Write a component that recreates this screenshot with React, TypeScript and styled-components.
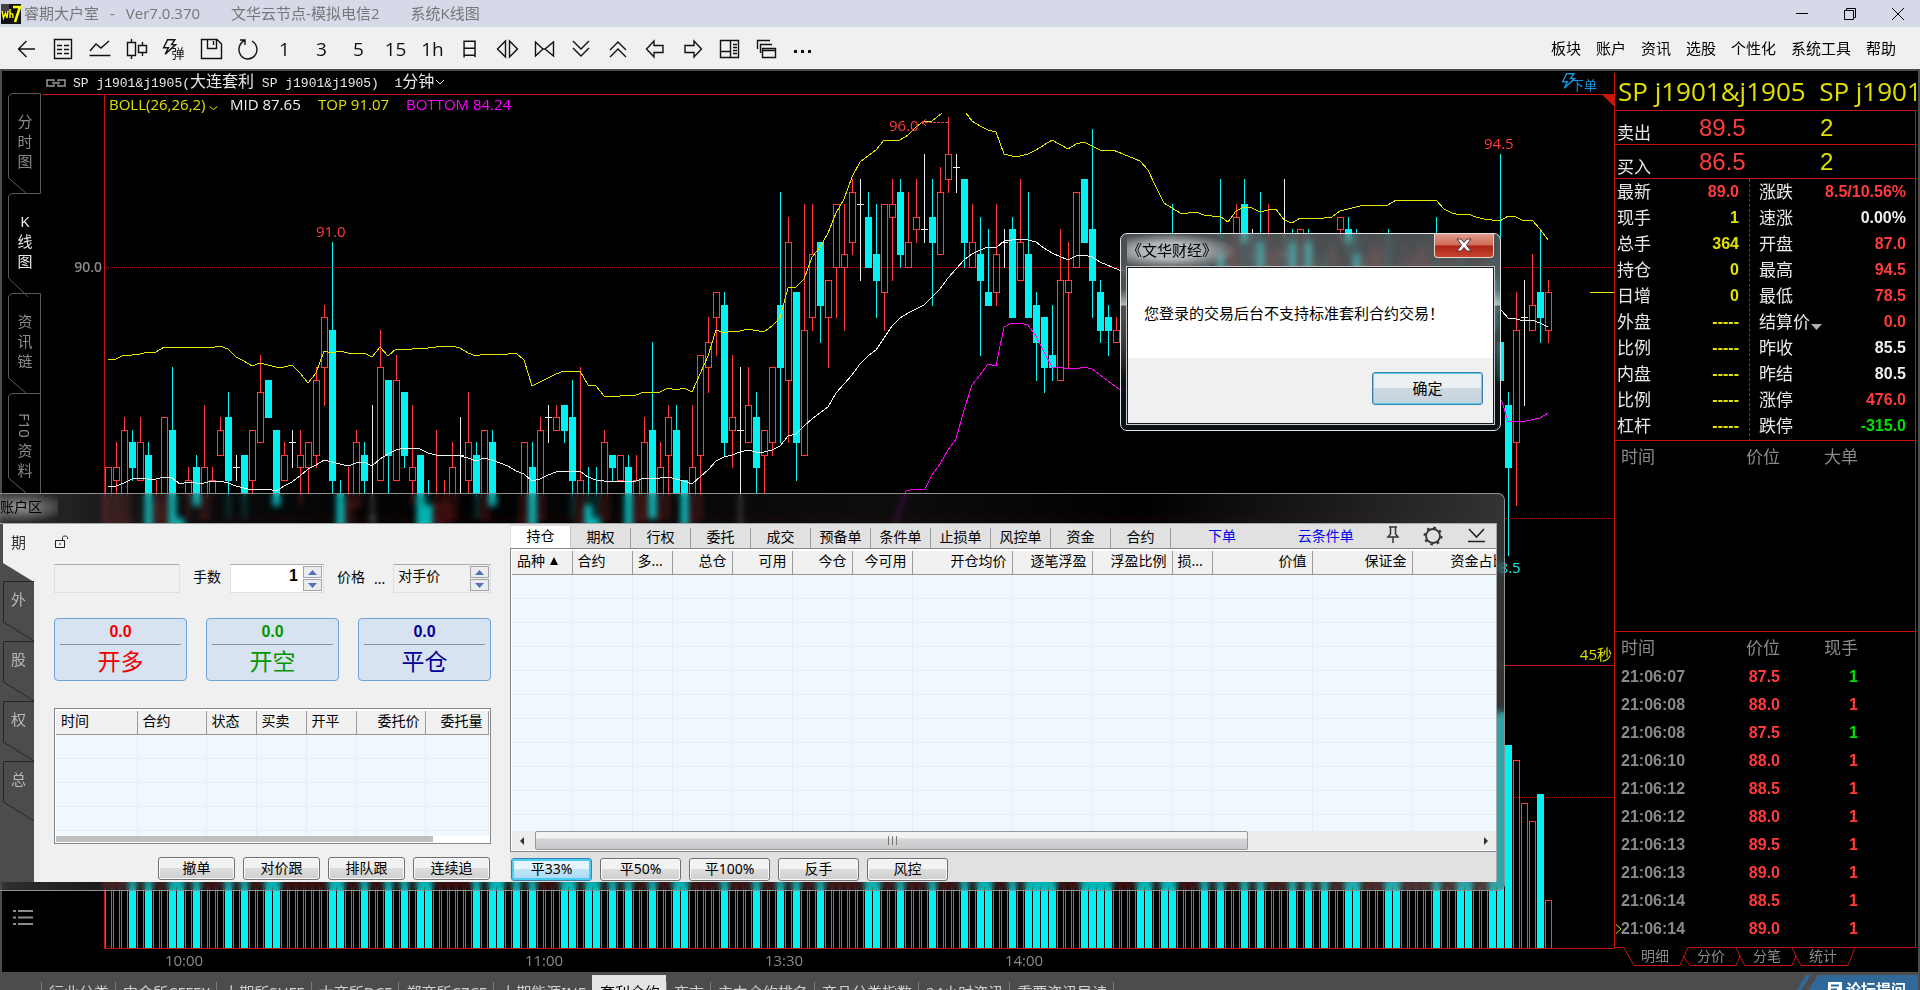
import React from "react";
import styled, { createGlobalStyle, css } from "styled-components";

const sans = `"Noto Sans", "Noto Sans CJK SC", sans-serif`;
const hei = `"Open Sans", "Noto Sans CJK SC", sans-serif`;
const arial = `"Liberation Sans", "Noto Sans CJK SC", sans-serif`;
const RED = "#ff3c3c";
const LINE = "#c8140a";
const CYAN = "#00f2f2";
const YELLOW = "#e0e000";
const GREEN = "#00e000";

const Global = createGlobalStyle`
  * { box-sizing: border-box; }
  html, body { margin: 0; height: 100%; background: #000; overflow: hidden; }
  #root { height: 100%; }
  button { font: inherit; color: inherit; background: none; border: 0; padding: 0; cursor: pointer; }
  a { color: inherit; text-decoration: none; }
  input { font: inherit; color: inherit; }
`;

const Page = styled.div`
  position: relative;
  display: flex;
  flex-direction: column;
  height: 100%;
  overflow: hidden;
  font-family: ${sans};
  font-size: 15px;
  white-space: nowrap;
`;

/* ---------- title bar and toolbar ---------- */

const TitleBar = styled.header`
  display: flex;
  align-items: center;
  flex: 0 0 27px;
  padding-left: 1px;
  background: #d6d9e8;
  color: #767676;
  font-family: ${hei};
`;
const Titles = styled.div`
  display: flex;
  gap: 31px;
  flex: 1;
  padding: 0 0 2px 3px;
  line-height: 24px;
`;
const TitleMain = styled.span`
  display: flex;
  gap: 11px;
`;
const WindowControls = styled.div`
  display: flex;
  gap: 4px;
`;
const ControlButton = styled.button`
  display: grid;
  place-items: center;
  width: 44px;
  height: 27px;
`;
const ToolBar = styled.div`
  display: flex;
  align-items: center;
  justify-content: space-between;
  flex: 0 0 44px;
  padding: 0 24px 0 7px;
  background: #f0f0f0;
  border-bottom: 2px solid #4c4c4c;
`;
const Tools = styled.div`
  display: flex;
`;
const ToolButton = styled.button`
  display: grid;
  place-items: center;
  width: 37px;
  height: 34px;
  padding-top: 2px;
  font-family: ${hei};
  font-size: 19px;
  line-height: 24px;
  color: #111;
`;
const Menu = styled.nav`
  display: flex;
  gap: 15px;
  color: #000;
  line-height: 22px;
`;

/* ---------- workspace ---------- */

const Workspace = styled.main`
  display: flex;
  flex: 1;
  min-height: 0;
  background: #000;
  border: solid #4c4c4c;
  border-width: 0 2px;
`;
const SideRail = styled.nav`
  display: flex;
  flex-direction: column;
  justify-content: space-between;
  flex: 0 0 40px;
  padding: 22px 0 45px 6px;
`;
const SideTab = styled.button<{ $active?: boolean }>`
  position: relative;
  display: flex;
  flex-direction: column;
  align-items: center;
  gap: 4px;
  width: 34px;
  height: 100px;
  padding-top: 20px;
  font-size: 15px;
  line-height: 16px;
  color: ${(p) => (p.$active ? "#e8e8e8" : "#8a8a8a")};
  svg {
    position: absolute;
    inset: 0;
  }
`;
const Sideways = styled.span`
  writing-mode: vertical-rl;
  line-height: 18px;
`;
const RailMenu = styled.button`
  width: 22px;
  height: 18px;
  margin-left: 5px;
`;
const ChartPane = styled.section`
  display: flex;
  flex-direction: column;
  flex: 1;
  min-width: 0;
`;
const ChartHeader = styled.div`
  display: flex;
  align-items: center;
  flex: 0 0 24px;
  padding: 0 17px 0 4px;
  border-bottom: 1px solid ${LINE};
  color: #e8e8e8;
  font-size: 16px;
`;
const Contract = styled.span`
  flex: 1;
  padding-left: 7px;
  line-height: 20px;
`;
const Mono = styled.span`
  font-family: "Liberation Mono", monospace;
  font-size: 13px;
  white-space: pre;
`;
const PlaceOrder = styled.button`
  display: flex;
  align-items: flex-end;
  font-size: 13px;
  line-height: 16px;
  color: #0f96e0;
  svg {
    margin: 0 -6px 4px 0;
  }
`;
const Chart = styled.svg`
  flex: 1;
  display: block;
  width: 100%;
  min-height: 0;
  font-family: ${hei};
  font-size: 15px;
`;

/* ---------- quote panel ---------- */

const QuotePanel = styled.aside`
  position: relative;
  flex: 0 0 304px;
  min-width: 0;
  display: flex;
  flex-direction: column;
  padding: 2px 2px 0 0;
  color: #e8e8e8;
`;
const QuoteName = styled.h1`
  margin: 0;
  padding: 0 0 0 3px;
  height: 37px;
  overflow: hidden;
  border-left: 1px solid ${LINE};
  font: 400 26px/36px ${hei};
  white-space: pre;
  color: ${YELLOW};
`;
const QuoteBody = styled.div`
  display: flex;
  flex-direction: column;
  border: solid ${LINE};
  border-width: 0 1px;
`;
const Depth = styled.div`
  display: grid;
  grid-template-columns: 82px 115px 1fr;
  align-items: center;
  height: 34px;
  padding-left: 2px;
  border-top: 1px solid ${LINE};
  font-size: 17px;
  & > b {
    font: 400 24px/34px ${arial};
    color: ${YELLOW};
    padding-left: 6px;
  }
  & > b:nth-child(2) {
    color: ${RED};
    padding: 0;
  }
  & > span {
    padding-top: 6px;
  }
`;
const Stats = styled.div`
  display: grid;
  grid-template-columns: 134px 1fr;
  border-top: 1px solid ${LINE};
  height: 262px;
`;
const StatList = styled.dl`
  margin: 0;
  padding: 0 10px 2px 2px;
  & + & {
    padding: 0 9px 2px 9px;
    border-left: 1px dashed ${LINE};
  }
`;
const Stat = styled.div`
  display: flex;
  justify-content: space-between;
  height: 26px;
  line-height: 26px;
  dt {
    font-size: 17px;
  }
  dd {
    margin: 0;
    font: 700 16px/26px ${arial};
  }
  svg {
    vertical-align: -4px;
  }
`;
const Ticks = styled.table<{ $height: number }>`
  display: block;
  width: 100%;
  height: ${(p) => p.$height}px;
  padding-left: 6px;
  border-collapse: collapse;
  border-top: 1px solid ${LINE};
  font: 700 16px/28px ${arial};
  th {
    height: 31px;
    padding: 3px 0 0;
    font-size: 17px;
    font-weight: 400;
    color: #8a8a8a;
    text-align: right;
  }
  td {
    height: 28px;
    padding: 0;
    text-align: right;
  }
  th:first-child,
  td:first-child {
    width: 80px;
    text-align: left;
    color: #8a8a8a;
  }
  th:nth-child(2),
  td:nth-child(2) {
    width: 79px;
    color: ${RED};
  }
  th:nth-child(2) {
    color: #8a8a8a;
  }
  th:nth-child(3) {
    width: 78px;
  }
`;
const Cursor = styled.i`
  position: absolute;
  left: 2px;
  bottom: 34px;
`;
const DetailTabs = styled.nav`
  position: relative;
  display: flex;
  height: 24px;
  padding-left: 13px;
  font-size: 14px;
  line-height: 18px;
  color: #8a8a8a;
  svg {
    position: absolute;
    left: 0;
    top: 0;
  }
  button {
    width: 56px;
    height: 18px;
  }
`;

/* ---------- bottom bar ---------- */

const BottomBar = styled.footer`
  display: flex;
  justify-content: space-between;
  align-items: flex-start;
  flex: 0 0 18px;
  padding: 3px 2px 0 41px;
  overflow: hidden;
  background: #4c4c4c;
  color: #d0d0d0;
`;
const BoardTabs = styled.nav`
  display: flex;
  padding-top: 7px;
`;
const BoardTab = styled.a<{ $active?: boolean }>`
  height: 24px;
  padding: 0 6px 0 7px;
  border-left: 1px solid #7c7c7c;
  line-height: 20px;
  ${(p) =>
    p.$active &&
    css`
      margin-top: -7px;
      padding-top: 7px;
      height: 32px;
      border-color: #e4e4e4;
      background: #e4e4e4;
      color: #000;
    `}
`;
const ForumLink = styled.a`
  display: flex;
  align-items: center;
  gap: 4px;
  height: 26px;
  padding: 2px 12px 0 32px;
  font-weight: 600;
  line-height: 24px;
  color: #fff;
  background: linear-gradient(122deg, transparent 8px, #2f6899 9px, #2f6899 12px, transparent 13px, transparent 18px, #2f6899 19px);
`;

/* ---------- floating windows ---------- */

const AccountWindow = styled.section`
  position: absolute;
  top: 493px;
  left: 0;
  right: 415px;
  height: 398px;
  display: flex;
  flex-direction: column;
  padding: 0 7px 8px 0;
  border: solid #8c9294;
  border-width: 1px 1px 1px 0;
  border-radius: 0 7px 7px 0;
  background: linear-gradient(90deg, rgba(90, 94, 96, 0.5), rgba(50, 56, 60, 0.2) 12%, rgba(0, 6, 10, 0.1) 30%, rgba(60, 66, 68, 0.2) 58%, rgba(0, 5, 8, 0.1) 76%, rgba(110, 114, 116, 0.45) 100%);
  backdrop-filter: blur(3px) brightness(0.95);
`;
const AccountTitle = styled.h2`
  position: relative;
  align-self: flex-start;
  margin: 0;
  flex: 0 0 29px;
  padding: 0 16px 0 0;
  font: 400 14px/26px ${sans};
  color: #000;
  background: radial-gradient(ellipse 50px 16px at 20px 13px, rgba(160, 160, 160, 0.9), transparent);
`;
const AccountBody = styled.div`
  display: flex;
  flex: 1;
  min-height: 0;
  border: solid #a4aaac;
  border-width: 1px 1px 0 0;
  background: #f0f0f0;
  color: #000;
  font-size: 14px;
`;
const MarketRail = styled.nav`
  flex: 0 0 34px;
  padding-left: 3px;
  background: #4c4c4c;
`;
const MarketTab = styled.button<{ $active?: boolean }>`
  position: relative;
  display: block;
  width: 31px;
  height: 60px;
  padding: 0 0 24px;
  font-size: 15px;
  line-height: 36px;
  color: ${(p) => (p.$active ? "#333" : "#b8b8b8")};
  &:first-child {
    height: 57px;
  }
  svg {
    position: absolute;
    inset: 0;
  }
  span {
    position: relative;
  }
`;
const OrderForm = styled.form`
  display: flex;
  flex-direction: column;
  flex: 0 0 476px;
  min-width: 0;
  padding: 11px 19px 0 20px;
`;
const FormRow = styled.div`
  display: flex;
  align-items: center;
  height: 29px;
  margin: 16px 0 25px;
  line-height: 20px;
  & > label {
    padding-bottom: 4px;
    margin: 0 9px 0 13px;
  }
`;
const Field = styled.div<{ $width: number; $white?: boolean }>`
  display: flex;
  width: ${(p) => p.$width}px;
  height: 29px;
  border: 1px solid #dcdfe6;
  border-top-color: #a9adb5;
  background: ${(p) => (p.$white ? "#fff" : "#f0f0f0")};
  input {
    flex: 1;
    min-width: 0;
    padding: 0 4px 6px;
    border: 0;
    background: transparent;
    outline: 0;
  }
`;
const Bold = styled.input`
  text-align: right;
  font: 700 16px/22px ${arial};
`;
const Spinner = styled.div`
  display: flex;
  flex-direction: column;
  gap: 1px;
  padding: 1px;
  button {
    display: grid;
    place-items: center;
    width: 19px;
    height: 12px;
    border: 1px solid #a2a4a8;
    background: #ececee;
  }
`;
const Dots = styled.button`
  width: 12px;
  margin-right: 8px;
  line-height: 20px;
`;
const TradeButtons = styled.div`
  display: grid;
  grid-template-columns: repeat(3, 133px);
  justify-content: space-between;
`;
const TradeButton = styled.button<{ $color: string }>`
  height: 63px;
  padding: 0 5px 4px;
  border: 1px solid #6ea3d8;
  border-radius: 4px;
  background: #d8e3f1;
  color: ${(p) => p.$color};
  font-size: 23px;
  line-height: 30px;
  b {
    display: block;
    margin-bottom: 1px;
    border-bottom: 1px solid #8b9095;
    font: 700 16px/24px ${arial};
  }
`;
const OrderList = styled.div`
  display: flex;
  flex-direction: column;
  height: 136px;
  margin-top: 27px;
  padding: 2px 1px 1px;
  overflow: hidden;
  border: 1px solid #828790;
  background: #fff;
`;
const GridScroll = styled.div`
  flex: 1;
  min-height: 0;
  overflow: hidden;
`;
const DataGrid = styled.table`
  table-layout: fixed;
  width: max-content;
  border-collapse: collapse;
  background: #f0f8ff;
  th {
    height: 23px;
    padding: 0 5px 2px;
    overflow: hidden;
    border-right: 1px solid #9a9a9a;
    border-bottom: 1px solid #9a9a9a;
    background: #f1f1f1;
    font-weight: 400;
    font-size: 14px;
    line-height: 20px;
  }
  td {
    height: 24px;
    padding: 0;
    border-right: 1px solid #ececec;
    border-bottom: 1px solid #ececec;
  }
`;
const Th = styled.th<{ $w: number; $right?: boolean }>`
  width: ${(p) => p.$w}px;
  text-align: ${(p) => (p.$right ? "right" : "left")};
`;
const ThinScroll = styled.div`
  flex: 0 0 6px;
  width: 87%;
  background: #bfbfbf;
`;
const FormActions = styled.div`
  display: flex;
  justify-content: flex-end;
  gap: 8px;
  margin: 13px 1px 0 0;
`;
const PushButton = styled.button<{ $w: number; $focus?: boolean }>`
  width: ${(p) => p.$w}px;
  height: 23px;
  padding-bottom: 2px;
  border: 1px solid #707070;
  border-radius: 3px;
  box-shadow: inset 0 0 0 1px #fafafa;
  background: linear-gradient(#f2f2f2 48%, #dcdcdc 50%, #cfcfcf);
  line-height: 18px;
  ${(p) =>
    p.$focus &&
    css`
      border-color: #3c7fb1;
      box-shadow: inset 0 0 0 2px #48cdf5;
      background: linear-gradient(#e6f5fd 48%, #bfe4f8 50%, #a9d8f2);
    `}
`;
const Positions = styled.section`
  display: flex;
  flex-direction: column;
  flex: 1;
  min-width: 0;
  padding: 2px 0 0 1px;
  background: #e1e1e1;
`;
const PositionTabs = styled.div`
  display: flex;
  align-items: flex-start;
  height: 22px;
  line-height: 22px;
`;
const PositionTab = styled.button<{ $active?: boolean }>`
  width: 60px;
  height: 20px;
  margin-top: 2px;
  padding-bottom: 2px;
  border-right: 1px solid #9c9c9c;
  line-height: 18px;
  ${(p) =>
    p.$active &&
    css`
      height: 22px;
      margin-top: 0;
      border-color: #c8c8c8;
      background: #fff;
    `}
`;
const TabLinks = styled.div`
  display: flex;
  justify-content: space-between;
  align-items: center;
  flex: 1;
  padding: 0 10px 0 37px;
  a {
    padding-bottom: 5px;
    color: #0000f0;
    line-height: 18px;
  }
  a + a {
    margin: 0 8px 0 38px;
  }
  button {
    height: 24px;
  }
`;
const PositionGrid = styled.div`
  display: flex;
  flex-direction: column;
  flex: 1;
  min-height: 0;
  margin-left: -1px;
  padding: 2px 0 1px 1px;
  border: 1px solid #828790;
  border-right: 0;
  background: #fff;
`;
const HScroll = styled.div`
  display: flex;
  align-items: center;
  flex: 0 0 19px;
  padding: 0 5px;
  background: #ececec;
`;
const Thumb = styled.div`
  display: grid;
  place-items: center;
  flex: 0 0 713px;
  height: 19px;
  margin: 0 auto 0 8px;
  border: 1px solid #979797;
  border-radius: 2px;
  background: linear-gradient(#f3f3f3 35%, #d6d6d8 40%, #c9c9cd);
`;
const PositionActions = styled.div`
  display: flex;
  gap: 8px;
  height: 30px;
  padding-top: 6px;
`;

const Dialog = styled.section`
  position: absolute;
  top: 233px;
  left: 1120px;
  width: 381px;
  height: 198px;
  display: flex;
  flex-direction: column;
  padding: 0 6px 6px;
  border: 1px solid #dfe4e6;
  border-radius: 7px;
  background: linear-gradient(rgba(112, 120, 124, 0.65), rgba(120, 126, 130, 0.65) 28%, rgba(205, 210, 214, 0.85) 36%, rgba(92, 96, 100, 0.8) 37%, rgba(70, 72, 80, 0.7) 55%, rgba(14, 22, 26, 0.75) 75%);
  backdrop-filter: blur(3px);
`;
const DialogTitle = styled.div`
  display: flex;
  justify-content: space-between;
  height: 33px;
  h2 {
    margin: 0;
    padding: 0 22px 2px 0;
    font: 400 15px/32px ${sans};
    color: #000;
    background: radial-gradient(ellipse 68px 18px at 42px 17px, rgba(185, 188, 190, 0.95) 45%, transparent);
  }
`;
const CloseButton = styled.button`
  display: grid;
  place-items: center;
  width: 60px;
  height: 24px;
  padding-bottom: 2px;
  border: 1px solid #e6d6d2;
  border-top: 0;
  border-radius: 0 0 4px 4px;
  background: linear-gradient(#e09a8c, #cf6b58 48%, #b02414 52%, #c44530);
`;
const DialogBody = styled.div`
  display: flex;
  flex-direction: column;
  flex: 1;
  border: 1px solid #1a1a1a;
  outline: 1px solid #c8ccce;
  background: #f0f0f0;
  color: #000;
  font-size: 15px;
  p {
    height: 90px;
    margin: 0;
    padding: 0 16px;
    background: #fff;
    line-height: 90px;
  }
`;
const OkButton = styled.button`
  align-self: flex-end;
  width: 111px;
  height: 33px;
  margin: 14px 10px 0 0;
  padding-bottom: 2px;
  border: 1px solid #3c7fb1;
  border-radius: 3px;
  box-shadow: inset 0 0 0 1px #60cdf0;
  background: linear-gradient(#eaf0f4 47%, #cdd9e1 50%, #c6d4dd);
`;

/* ---------- chart data: kind, high, body top, body bottom, low (half points above 90) ---------- */

const candleText = `r-16,-16,-24,-24 r-14,-16,-17,-24 r-12,-13,-24,-24 c-13,-14,-16,-17 r-12,-14,-17,-17 c-14,-15,-24,-24 r-17,-19,-24,-24 r-12,-12,-24,-24
c-8,-13,-24,-24 c-20,-20,-24,-24 r-16,-17,-18,-20 c-15,-16,-19,-19 r-11,-16,-20,-20 r-16,-17,-18,-18 r-12,-13,-15,-15 c-10,-12,-17,-20
w-15,-16,-16,-17 c-15,-15,-18,-20 r-13,-13,-17,-18 r-7,-10,-14,-14 c-9,-9,-12,-12 c-13,-13,-19,-19 r-14,-15,-17,-17 w-13,-14,-14,-16
r-13,-15,-16,-19 r-14,-14,-16,-18 r-8,-9,-15,-16 r-3,-4,-8,-11 c2,-5,-17,-18 c-17,-18,-24,-24 r-16,-19,-24,-24 r-13,-14,-19,-19
c-14,-15,-17,-18 w-11,-20,-20,-24 r-5,-8,-17,-17 c-9,-9,-15,-18 r-7,-9,-17,-17 c-10,-10,-15,-16 r-11,-16,-17,-19 c-15,-15,-24,-24
c-17,-19,-24,-24 r-13,-19,-24,-24 r-17,-19,-24,-24 r-14,-16,-20,-20 w-12,-15,-15,-18 r-10,-14,-17,-18 c-14,-15,-18,-20 r-13,-13,-20,-20
c-13,-14,-19,-19 c-22,-22,-24,-24 r-22,-22,-24,-24 c-22,-22,-24,-24 r-14,-14,-24,-24 c-14,-16,-24,-24 r-12,-13,-20,-20 w-11,-12,-12,-14
r-11,-12,-13,-13 c-11,-11,-13,-14 c-9,-12,-17,-20 r-8,-17,-22,-24 c-16,-19,-24,-24 c-16,-20,-24,-24 r-13,-14,-20,-20 c-15,-15,-16,-17
r-15,-15,-17,-17 c-15,-16,-24,-24 r-15,-17,-24,-24 r-12,-14,-20,-20 c-6,-13,-20,-20 r-14,-16,-20,-20 r-11,-12,-15,-20 c-11,-13,-18,-18
c-17,-17,-24,-24 r-11,-16,-24,-24 r-7,-7,-15,-20 r-4,-6,-8,-10 r-2,-2,-4,-7 c-2,-3,-14,-15 r-7,-12,-13,-16 w-8,-13,-13,-24
r-8,-11,-14,-14 c-10,-12,-16,-18 r-13,-13,-15,-18 r-8,-8,-14,-15 c6,-3,-8,-14 r4,2,-9,-14 c-2,-2,-14,-17 r5,-5,-15,-15
r5,1,-4,-5 c2,2,-3,-6 r-1,-1,-4,-8 r5,5,0,-4 r5,1,0,-5 r7,6,2,1 w7,5,5,-1 c6,4,0,0
c5,1,-1,-4 r5,5,-2,-5 r7,5,4,-1 c7,6,1,0 r6,2,0,0 r7,4,3,2 w9,3,3,2 c7,4,2,-3
r8,6,1,1 r12,9,7,6 w9,8,8,6 c7,7,2,0 r5,2,0,0 c4,1,-1,-7 c3,-2,-3,-3 r5,1,-2,-3
w3,2,2,0 c4,3,-4,-4 r7,2,-1,-1 c6,1,-4,-4 c-2,-3,-6,-9 c-4,-4,-8,-10 c-3,-7,-8,-9 r3,-1,-9,-9
r2,-1,-2,-8 r6,6,0,0 c7,7,2,2 c11,3,-1,-4 c-1,-2,-5,-6 c-3,-4,-5,-7 r-4,-5,-6,-6 r-3,-4,-8,-8
r-3,-4,-8,-10 c-4,-5,-8,-11 c-5,-6,-10,-12 r-4,-5,-9,-10 c-2,-4,-8,-9 c5,-2,-4,-6 r0,-2,-4,-5 r1,0,-3,-4
r0,-1,-4,-4 c1,0,-4,-6 r1,-1,-3,-4 c7,1,-2,-3 r2,1,-2,-2 r5,4,-1,-2 c7,5,2,-1 w3,1,1,-2
c6,2,-1,-1 r5,1,-2,-2 r2,1,-2,-3 w7,1,1,0 c3,2,-3,-4 r3,3,-2,-3 c3,2,-3,-5 r1,0,-3,-3
c1,-1,-4,-5 r2,1,-3,-4 r4,4,3,2 c4,3,2,1 c3,1,-3,-5 r1,0,-3,-4 r2,1,-2,-2 r2,1,-1,-2
c3,-2,-4,-5 c0,-1,-4,-5 r2,0,-3,-3 r1,0,-3,-4 r2,1,-2,-2 r2,0,-3,-3 c4,-2,-4,-5 r1,-1,-4,-5
r1,-2,-4,-4 c2,-1,-5,-6 c-1,-3,-6,-6 r0,-3,-5,-6 r1,-1,-5,-5 c1,-1,-5,-8 c9,-6,-9,-9 c-10,-11,-16,-23
r-2,-5,-14,-19 w-1,-4,-4,-11 r1,-3,-5,-5 c3,-2,-4,-6 r-1,-2,-5,-6`;

const candles = candleText.split(/\s+/).map((s) => {
  const [high, top, bottom, low] = s.slice(1).split(",").map(Number);
  return { kind: s[0], high, top, bottom, low };
});

const lateVolume: Record<number, number> = { 172: 850, 173: 712, 174: 712, 175: 745, 176: 760, 177: 803, 178: 821, 179: 794, 180: 900 };
const kinds: Record<string, string> = { r: RED, c: CYAN, w: "#f0f0f0" };
const py = (k: number) => Math.round(267 - 12.53 * k);

const topBand = [
  "108,360 116,359 124,355 132,355 140,354 148,352 156,352 164,347 172,348 180,347 215,347 220,346 228,349 236,357 244,361 252,366 260,363 268,365 276,367 284,367 292,365 300,373 308,383 316,373 324,351 332,353 340,351 348,353 364,353 372,357 380,347 388,356 396,349 412,349 428,348 444,346 452,346 460,348 468,353 476,356 484,354 508,354 516,353 524,360 532,386 540,382 548,378 556,374 564,371 580,371 588,385 596,386 604,396 612,397 620,396 636,395 644,392 660,392 668,388 676,390 684,388 692,392 700,374 708,356 716,330 724,333 732,331 740,331 748,329 764,332 772,326 780,318 788,288 796,287 804,279 812,257 820,247 828,233 836,213 844,199 852,177 860,162 868,156 876,150 884,140 892,141 900,140 908,135 916,127 924,121 932,121 942,113",
  "966,113 972,121 980,126 988,130 996,132 1004,154 1012,156 1020,156 1028,154 1036,150 1052,140 1068,149 1076,144 1084,142 1092,146 1100,150 1113,150 1118,152 1140,161 1148,170 1156,187 1164,203 1172,208 1180,213 1188,213 1196,212 1204,215 1212,216 1220,216 1228,222 1236,211 1244,207 1252,208 1260,212 1268,210 1276,209 1284,220 1292,223 1300,218 1308,218 1324,218 1332,217 1340,211 1348,209 1356,207 1364,205 1388,205 1396,200 1412,200 1420,201 1428,200 1436,200 1444,209 1452,213 1460,215 1468,214 1476,217 1484,219 1500,221 1508,216 1516,217 1524,221 1532,220 1540,229 1548,240",
];
const midBand =
  "108,486 116,486 124,483 132,479 140,478 148,479 156,479 164,477 172,478 180,484 188,482 196,483 204,483 212,481 220,481 228,483 236,486 244,488 252,490 260,489 268,489 276,491 284,486 292,482 300,476 308,469 316,465 324,460 332,462 348,466 356,463 364,462 372,466 380,459 388,454 396,450 404,448 420,449 428,453 436,455 444,456 452,455 460,456 468,458 476,461 484,458 492,460 500,463 508,466 516,471 524,474 532,481 540,479 548,475 556,472 564,471 580,471 588,477 596,480 612,482 620,481 628,482 636,481 644,478 660,478 668,477 676,479 684,481 692,484 700,477 708,470 716,461 724,457 732,455 740,452 748,450 756,452 764,452 772,450 780,446 788,436 796,434 804,426 812,419 828,407 836,393 844,384 852,375 860,364 868,356 876,350 884,338 892,326 900,318 908,313 916,309 924,305 932,297 940,289 948,278 956,269 964,260 972,254 980,250 988,247 996,248 1004,241 1012,240 1020,239 1028,240 1036,242 1044,248 1052,253 1068,260 1076,256 1084,255 1092,257 1100,262 1119,270 1300,290 1502,311 1508,318 1516,319 1524,321 1532,320 1540,323 1548,327";
const lowBand =
  "895,524 906,491 914,489 925,489 932,475 940,464 948,450 956,439 964,410 972,385 980,375 988,364 996,366 1004,327 1012,323 1020,323 1028,325 1036,336 1044,352 1052,367 1076,369 1084,367 1092,369 1119,389 1160,410 1490,380 1502,402 1508,421 1526,421 1540,418 1548,413";

function PriceChart() {
  return (
    <Chart viewBox="42 95 1572 877" preserveAspectRatio="xMinYMin slice" role="img" aria-label="K线图">
      <g shapeRendering="crispEdges" fill="none">
        <g stroke="#a01010" strokeDasharray="1 1">
          <path d="M104 267.5H1614M104 518.5H1614M104 797.5H1614" />
        </g>
        {candles.map((c, i) => {
          const x = 105 + i * 8;
          const color = kinds[c.kind];
          const high = py(c.high);
          const top = py(c.top);
          const bottom = py(c.bottom);
          const low = py(c.low);
          const volumeTop = lateVolume[i] ?? 850;
          const up = c.kind !== "c";
          return (
            <g key={i} stroke={color}>
              {high < top && <path d={`M${x + 3.5} ${high}V${top}`} />}
              {low > bottom && <path d={`M${x + 3.5} ${bottom}V${low + 1}`} />}
              {c.kind === "c" && <rect x={x} y={top} width="7" height={bottom - top + 1} fill={CYAN} stroke="none" />}
              {c.kind === "r" && <rect x={x + 0.5} y={top + 0.5} width="6" height={bottom - top} />}
              {c.kind === "w" && <path d={`M${x} ${top + 0.5}h7`} />}
              {up ? (
                <rect x={x + 0.5} y={volumeTop + 0.5} width="6" height={948 - volumeTop} stroke={RED} />
              ) : (
                <rect x={x} y={volumeTop} width="7" height={948 - volumeTop} fill={CYAN} stroke="none" />
              )}
            </g>
          );
        })}
        {topBand.map((p) => (
          <polyline key={p.length} points={p} stroke="#e6e600" />
        ))}
        <polyline points={midBand} stroke="#f0f0f0" />
        <polyline points={lowBand} stroke="#f0f" />
        <path d="M104.5 95V948.5H1614M104 665.5H1614" stroke={LINE} />
        <path d="M1590 292.5h24" stroke="#e6e600" />
        <path d="M948 122.5H921" stroke={RED} strokeDasharray="3 1" />
        <path d="M926 119l-4 3.500l4 3.500" stroke={RED} />
        <path d="M1602 95H1614V107Z" fill={LINE} />
      </g>
      <text x="109" y="110" fill={YELLOW}>BOLL(26,26,2)</text>
      <path d="M209.500 106.500l4 3l4-3" fill="none" stroke={YELLOW} />
      <text x="230" y="110" fill="#f0f0f0">MID 87.65</text>
      <text x="318" y="110" fill={YELLOW}>TOP 91.07</text>
      <text x="406" y="110" fill="#f0f">BOTTOM 84.24</text>
      <g fill={RED}>
        <text x="316" y="237">91.0</text>
        <text x="889" y="131">96.0</text>
        <text x="1484" y="149">94.5</text>
      </g>
      <text x="1491" y="573" fill={CYAN}>78.5</text>
      <text x="102" y="272" textAnchor="end" fill="#8a8a8a" fontWeight="600" fontSize="14">90.0</text>
      <text x="1612" y="660" textAnchor="end" fill={YELLOW}>45秒</text>
      <g fill="#8a8a8a" textAnchor="middle">
        <text x="184" y="966">10:00</text>
        <text x="544" y="966">11:00</text>
        <text x="784" y="966">13:30</text>
        <text x="1024" y="966">14:00</text>
      </g>
    </Chart>
  );
}

/* ---------- icons ---------- */

const toolPaths: Record<string, string> = {
  返回: "M5 12H21M12.500 4L4.500 12L12.500 20",
  报价: "M3.500 2.500H20.500V21.500H3.500ZM6 8.500H11M13 8.500H18M6 12.500H11M13 12.500H18M6 16.500H11M13 16.500H18",
  分时: "M1.500 18.500H22.500M2 14L8 7L13 11L21 4",
  K线: "M6.500 2V6M2.500 5.500H10.500V18.500H2.500ZM6.500 18V22M17.500 5V8M13.500 8.500H21.500V15.500H13.500ZM17.500 15V19",
  保存: "M2.500 2.500H18L22.500 7V21.500H2.500ZM8.500 3V11.500H17.500V3M14.500 4V8",
  刷新: "M4 3H9V8M9 3.500A9 9.500 0 1 0 16 4",
  放大: "M10.500 4V20L2.500 12ZM14.500 4V20L22.500 12Z",
  缩小: "M3.500 5V19L11 12ZM21.500 5V19L13 12ZM11 12H13",
  下翻: "M4 4L12 12L20 4M4 11L12 19L20 11",
  上翻: "M4 13L12 5L20 13M4 20L12 12L20 20",
  左移: "M3.500 12L11 4V8.500H20V15.500H11V20Z",
  右移: "M21.500 12L14 4V8.500H5V15.500H14V20Z",
  布局: "M3.500 3.500H21.500V20.500H3.500ZM13.500 3V21M4 14.500H13M16 7.500H20M16 10.500H20M16 13.500H20M16 16.500H20",
  窗口: "M3.500 12V3.500H16M6.500 16V7.500H18M8.500 11.500H21.500V20.500H8.500ZM8.500 13.500H21",
};

const ToolIcon = ({ name }: { name: string }) => (
  <svg width="24" height="24" viewBox="0 0 24 24" fill="none" stroke="#111" strokeWidth="1.4" aria-hidden="true">
    <path d={toolPaths[name]} />
  </svg>
);

const Bolt = ({ size, color }: { size: number; color: string }) => (
  <svg width={size} height={size} viewBox="0 0 20 20" fill="none" stroke={color} strokeWidth="1.8" aria-hidden="true">
    <path d="M7 1H16L12 7H17L4 19L8 11H2Z" />
  </svg>
);

const tools = ["返回", "报价", "分时", "K线", "闪电", "保存", "刷新", "1", "3", "5", "15", "1h", "日", "放大", "缩小", "下翻", "上翻", "左移", "右移", "布局", "窗口", "更多"];

const FlashTool = styled.span`
  display: flex;
  align-items: flex-end;
  font-size: 13px;
  line-height: 14px;
  svg {
    margin: 0 -7px 5px 0;
  }
`;

function Tool({ name }: { name: string }) {
  if (toolPaths[name]) return <ToolIcon name={name} />;
  if (name === "闪电")
    return (
      <FlashTool>
        <Bolt size={16} color="#111" />弹
      </FlashTool>
    );
  if (name === "更多")
    return (
      <svg width="20" height="20" viewBox="0 0 20 20" aria-hidden="true">
        <path d="M1 11h3v3H1zM8 11h3v3H8zM15 11h3v3h-3z" fill="#111" />
      </svg>
    );
  return <>{name}</>;
}

const Arrow = ({ up }: { up?: boolean }) => (
  <svg width="9" height="5" viewBox="0 0 9 5" aria-hidden="true">
    <path d={up ? "M4.500 0L9 5H0Z" : "M4.500 5L9 0H0Z"} fill="#5070b8" />
  </svg>
);

/* ---------- content ---------- */

const leftStats: [string, string, string][] = [
  ["最新", "89.0", RED],
  ["现手", "1", YELLOW],
  ["总手", "364", YELLOW],
  ["持仓", "0", YELLOW],
  ["日增", "0", YELLOW],
  ["外盘", "-----", YELLOW],
  ["比例", "-----", YELLOW],
  ["内盘", "-----", YELLOW],
  ["比例", "-----", YELLOW],
  ["杠杆", "-----", YELLOW],
];
const rightStats: [string, string, string][] = [
  ["涨跌", "8.5/10.56%", RED],
  ["速涨", "0.00%", "#f0f0f0"],
  ["开盘", "87.0", RED],
  ["最高", "94.5", RED],
  ["最低", "78.5", RED],
  ["结算价", "0.0", RED],
  ["昨收", "85.5", "#f0f0f0"],
  ["昨结", "80.5", "#f0f0f0"],
  ["涨停", "476.0", RED],
  ["跌停", "-315.0", GREEN],
];
const ticks: [string, string, string][] = [
  ["21:06:07", "87.5", GREEN],
  ["21:06:08", "88.0", RED],
  ["21:06:08", "87.5", GREEN],
  ["21:06:10", "88.0", RED],
  ["21:06:12", "88.5", RED],
  ["21:06:12", "88.0", RED],
  ["21:06:13", "89.5", RED],
  ["21:06:13", "89.0", RED],
  ["21:06:14", "88.5", RED],
  ["21:06:14", "89.0", RED],
];
const orderCols: [string, number, boolean][] = [
  ["时间", 81, false],
  ["合约", 69, false],
  ["状态", 50, false],
  ["买卖", 50, false],
  ["开平", 50, false],
  ["委托价", 69, true],
  ["委托量", 63, true],
];
const positionCols: [string, number, boolean][] = [
  ["品种", 60, false],
  ["合约", 60, false],
  ["多...", 40, false],
  ["总仓", 60, true],
  ["可用", 60, true],
  ["今仓", 60, true],
  ["今可用", 60, true],
  ["开仓均价", 100, true],
  ["逐笔浮盈", 80, true],
  ["浮盈比例", 80, true],
  ["损...", 40, false],
  ["价值", 100, true],
  ["保证金", 100, true],
  ["资金占比", 100, true],
];
const boards = ["行业分类", "中金所CFFEX", "上期所SHFE", "大商所DCE", "郑商所CZCE", "上期能源INE", "套利合约", "夜市", "主力合约排名", "商品分类指数", "24小时资讯", "重要资讯导读"];

const StatValue = styled.span<{ $color: string }>`
  color: ${(p) => p.$color};
`;

function StatRows({ rows }: { rows: [string, string, string][] }) {
  return (
    <StatList>
      {rows.map(([label, value, color], i) => (
        <Stat key={i}>
          <dt>
            {label}
            {label === "结算价" && (
              <svg width="12" height="12" viewBox="0 0 12 12" aria-hidden="true">
                <path d="M1 4H12L6.500 10Z" fill="#b0b0b0" />
              </svg>
            )}
          </dt>
          <dd>
            <StatValue $color={color}>{value}</StatValue>
          </dd>
        </Stat>
      ))}
    </StatList>
  );
}

function Grid({ cols, rows }: { cols: [string, number, boolean][]; rows: number }) {
  return (
    <DataGrid>
      <thead>
        <tr>
          {cols.map(([label, w, right]) => (
            <Th key={label} $w={w} $right={right} scope="col">
              {label}
              {label === "品种" && (
                <svg width="14" height="9" viewBox="0 0 14 9" aria-hidden="true">
                  <path d="M9 0L13 8H5Z" fill="#000" />
                </svg>
              )}
            </Th>
          ))}
        </tr>
      </thead>
      <tbody>
        {Array.from({ length: rows }, (_, r) => (
          <tr key={r}>
            {cols.map(([label]) => (
              <td key={label} />
            ))}
          </tr>
        ))}
      </tbody>
    </DataGrid>
  );
}

function SpinButtons({ label }: { label: string }) {
  return (
    <Spinner>
      <button type="button" aria-label={`${label}增加`}>
        <Arrow up />
      </button>
      <button type="button" aria-label={`${label}减少`}>
        <Arrow />
      </button>
    </Spinner>
  );
}

function SideTabs() {
  const tabs = [["分", "时", "图"], ["K", "线", "图"], ["资", "讯", "链"], ["F10", "资", "料"]];
  return (
    <div>
      {tabs.map((chars, i) => (
        <SideTab key={i} $active={i === 1}>
          <svg width="34" height="108" viewBox="0 0 34 108" fill="none" stroke="#5a5a5a" aria-hidden="true">
            <path d={i === 1 ? "M18 .5H4L.5 3V85L20 104" : "M18 100L.5 85V3L4 .5H32.500V100.500H18"} />
          </svg>
          {chars.map((c) => (c === "F10" ? <Sideways key={c}>{c}</Sideways> : <span key={c}>{c}</span>))}
        </SideTab>
      ))}
    </div>
  );
}

function Quote() {
  return (
    <QuotePanel>
      <QuoteName>{"SP j1901&j1905  SP j1901&j1905"}</QuoteName>
      <QuoteBody>
        <Depth>
          <span>卖出</span>
          <b>89.5</b>
          <b>2</b>
        </Depth>
        <Depth>
          <span>买入</span>
          <b>86.5</b>
          <b>2</b>
        </Depth>
        <Stats>
          <StatRows rows={leftStats} />
          <StatRows rows={rightStats} />
        </Stats>
        <Ticks $height={191}>
          <thead>
            <tr>
              <th scope="col">时间</th>
              <th scope="col">价位</th>
              <th scope="col">大单</th>
            </tr>
          </thead>
        </Ticks>
        <Ticks $height={316}>
          <thead>
            <tr>
              <th scope="col">时间</th>
              <th scope="col">价位</th>
              <th scope="col">现手</th>
            </tr>
          </thead>
          <tbody>
            {ticks.map(([time, price, color], i) => (
              <tr key={i}>
                <td>{time}</td>
                <td>{price}</td>
                <td>
                  <StatValue $color={color}>1</StatValue>
                </td>
              </tr>
            ))}
          </tbody>
        </Ticks>
      </QuoteBody>
      <DetailTabs>
        <svg width="302" height="20" viewBox="0 0 302 20" fill="none" stroke={LINE} aria-hidden="true">
          <path d="M0 .5H10L20 18.500H66L74 .5H302M69 9L76 18.500H122L126 9L122 .500M125 8L131 18.500H178L182 9L178 .500M181 8L187 18.500H234L241 .5" />
        </svg>
        {["明细", "分价", "分笔", "统计"].map((t) => (
          <button key={t}>{t}</button>
        ))}
      </DetailTabs>
      <Cursor>
        <svg width="6" height="10" viewBox="0 0 6 10" fill="none" stroke={YELLOW} aria-hidden="true">
          <path d="M0 .5L5 5L0 9.500" />
        </svg>
      </Cursor>
    </QuotePanel>
  );
}

function Account() {
  return (
    <AccountWindow>
      <AccountTitle>账户区</AccountTitle>
      <AccountBody>
        <MarketRail>
          {["期", "外", "股", "权", "总"].map((t, i) => (
            <MarketTab key={t} $active={i === 0}>
              <svg width="31" height="60" viewBox="0 0 31 60" aria-hidden="true">
                {i === 0 ? (
                  <path d="M0 0H31V58L0 39Z" fill="#f0f0f0" />
                ) : (
                  <path d="M31 .5H.5V41L31 60" fill="none" stroke="#262626" />
                )}
              </svg>
              <span>{t}</span>
            </MarketTab>
          ))}
        </MarketRail>
        <OrderForm onSubmit={(e) => e.preventDefault()}>
          <svg width="15" height="13" viewBox="0 0 15 13" fill="none" stroke="#222" aria-hidden="true">
            <path d="M1.500 5.500H10.500V12.500H1.500ZM8.500 5V2.500C8.500 .500 13.500 .500 13.500 2.500V4M6 8V10" />
          </svg>
          <FormRow>
            <Field $width={126}>
              <input aria-label="合约" />
            </Field>
            <label htmlFor="lots">手数</label>
            <Field $width={94} $white>
              <Bold id="lots" defaultValue="1" />
              <SpinButtons label="手数" />
            </Field>
            <label htmlFor="price">价格</label>
            <Dots type="button">...</Dots>
            <Field $width={98}>
              <input id="price" defaultValue="对手价" />
              <SpinButtons label="价格" />
            </Field>
          </FormRow>
          <TradeButtons>
            <TradeButton $color="#f00000">
              <b>0.0</b>开多
            </TradeButton>
            <TradeButton $color="#009600">
              <b>0.0</b>开空
            </TradeButton>
            <TradeButton $color="#000096">
              <b>0.0</b>平仓
            </TradeButton>
          </TradeButtons>
          <OrderList>
            <GridScroll>
              <Grid cols={orderCols} rows={5} />
            </GridScroll>
            <ThinScroll />
          </OrderList>
          <FormActions>
            {["撤单", "对价跟", "排队跟", "连续追"].map((t) => (
              <PushButton key={t} type="button" $w={77}>
                {t}
              </PushButton>
            ))}
          </FormActions>
        </OrderForm>
        <Positions>
          <PositionTabs>
            {["持仓", "期权", "行权", "委托", "成交", "预备单", "条件单", "止损单", "风控单", "资金", "合约"].map((t, i) => (
              <PositionTab key={t} $active={i === 0}>
                {t}
              </PositionTab>
            ))}
            <TabLinks>
              <a href="#order">下单</a>
              <a href="#cloud">云条件单</a>
              <button aria-label="固定">
                <svg width="14" height="18" viewBox="0 0 14 18" fill="none" stroke="#333" strokeWidth="1.500" aria-hidden="true">
                  <path d="M3 1H11M4.500 1V8L2 11H12L9.500 8V1M7 11V17" />
                </svg>
              </button>
              <button aria-label="设置">
                <svg width="20" height="20" viewBox="0 0 20 20" fill="none" stroke="#333" aria-hidden="true">
                  <circle cx="10" cy="10" r="7" strokeWidth="1.800" />
                  <circle cx="10" cy="10" r="8.500" strokeWidth="2" strokeDasharray="2.600 4.080" />
                </svg>
              </button>
              <button aria-label="收起">
                <svg width="19" height="18" viewBox="0 0 19 18" fill="none" stroke="#222" strokeWidth="1.600" aria-hidden="true">
                  <path d="M2 3L9.500 11L17 3M1 15.500H18" />
                </svg>
              </button>
            </TabLinks>
          </PositionTabs>
          <PositionGrid>
            <GridScroll>
              <Grid cols={positionCols} rows={11} />
            </GridScroll>
            <HScroll>
              <svg width="10" height="10" viewBox="0 0 10 10" aria-hidden="true">
                <path d="M7 1V9L3 5Z" fill="#333" />
              </svg>
              <Thumb>
                <svg width="10" height="9" viewBox="0 0 10 9" stroke="#777" aria-hidden="true">
                  <path d="M1.500 0V9M5.500 0V9M9.500 0V9" />
                </svg>
              </Thumb>
              <svg width="10" height="10" viewBox="0 0 10 10" aria-hidden="true">
                <path d="M3 1V9L7 5Z" fill="#333" />
              </svg>
            </HScroll>
          </PositionGrid>
          <PositionActions>
            {["平33%", "平50%", "平100%", "反手", "风控"].map((t, i) => (
              <PushButton key={t} $w={81} $focus={i === 0}>
                {t}
              </PushButton>
            ))}
          </PositionActions>
        </Positions>
      </AccountBody>
    </AccountWindow>
  );
}

export default function App() {
  return (
    <Page>
      <Global />
      <TitleBar>
        <svg width="20" height="20" viewBox="0 0 20 20" aria-hidden="true">
          <rect width="20" height="20" fill="#111" />
          <rect width="8" height="8" fill="#444" />
          <path d="M12 3H19L14 18" fill="none" stroke="#ff0" strokeWidth="2.500" />
          <path d="M1 7L2.500 14L4.500 9L6 14L7 7M9 5V14M9 10C12 9 12 10 12 14" fill="none" stroke="#ff0" strokeWidth="1.400" />
        </svg>
        <Titles>
          <TitleMain>
            <span>睿期大户室</span>
            <span>-</span>
            <span>Ver7.0.370</span>
          </TitleMain>
          <span>文华云节点-模拟电信2</span>
          <span>系统K线图</span>
        </Titles>
        <WindowControls>
          <ControlButton aria-label="最小化">
            <svg width="14" height="14" viewBox="0 0 14 14" stroke="#000" aria-hidden="true">
              <path d="M1 6.500H13" />
            </svg>
          </ControlButton>
          <ControlButton aria-label="还原">
            <svg width="14" height="14" viewBox="0 0 14 14" fill="none" stroke="#000" aria-hidden="true">
              <path d="M1.500 3.500H10.500V12.500H1.500ZM3.500 3V1.500H12.500V10.500H11" />
            </svg>
          </ControlButton>
          <ControlButton aria-label="关闭">
            <svg width="14" height="14" viewBox="0 0 14 14" stroke="#000" aria-hidden="true">
              <path d="M1 1L13 13M13 1L1 13" />
            </svg>
          </ControlButton>
        </WindowControls>
      </TitleBar>
      <ToolBar>
        <Tools>
          {tools.map((t) => (
            <ToolButton key={t} aria-label={t}>
              <Tool name={t} />
            </ToolButton>
          ))}
        </Tools>
        <Menu>
          {["板块", "账户", "资讯", "选股", "个性化", "系统工具", "帮助"].map((t) => (
            <a key={t} href="#menu">
              {t}
            </a>
          ))}
        </Menu>
      </ToolBar>
      <Workspace>
        <SideRail>
          <SideTabs />
          <RailMenu aria-label="列表">
            <svg width="22" height="18" viewBox="0 0 22 18" stroke="#8c8c8c" strokeWidth="2" aria-hidden="true">
              <path d="M0 2H3M5 2H20M0 8.500H3M5 8.500H20M0 15H3M5 15H20" />
            </svg>
          </RailMenu>
        </SideRail>
        <ChartPane>
          <ChartHeader>
            <svg width="20" height="8" viewBox="0 0 20 8" fill="none" stroke="#999" strokeWidth="1.500" aria-hidden="true">
              <path d="M8 2.500V1H1V7H8V5.500M12 2.500V1H19V7H12V5.500M6 4H14" />
            </svg>
            <Contract>
              <Mono>SP j1901&amp;j1905(</Mono>大连套利<Mono>{" SP j1901&j1905)  1"}</Mono>分钟
              <svg width="12" height="8" viewBox="0 0 12 8" fill="none" stroke="#e8e8e8" aria-hidden="true">
                <path d="M2 1L6 5L10 1" />
              </svg>
            </Contract>
            <PlaceOrder>
              <Bolt size={16} color="#0f96e0" />
              下单
            </PlaceOrder>
          </ChartHeader>
          <PriceChart />
        </ChartPane>
        <Quote />
      </Workspace>
      <BottomBar>
        <BoardTabs>
          {boards.map((b) => (
            <BoardTab key={b} href="#board" $active={b === "套利合约"}>
              {b}
            </BoardTab>
          ))}
          <BoardTab as="span" />
        </BoardTabs>
        <ForumLink href="#forum">
          <svg width="14" height="14" viewBox="0 0 14 14" aria-hidden="true">
            <path d="M0 0H14V12H6L2 14V12H0Z" fill="#fff" />
            <path d="M3 3.500H11M3 7.500H9" stroke="#2f6899" strokeWidth="2" />
          </svg>
          论坛提问
        </ForumLink>
      </BottomBar>
      <Account />
      <Dialog role="alertdialog" aria-label="《文华财经》">
        <DialogTitle>
          <h2>《文华财经》</h2>
          <CloseButton aria-label="关闭对话框">
            <svg width="16" height="14" viewBox="0 0 16 14" aria-hidden="true">
              <path d="M1 1H5L8 4.500L11 1H15L10.500 7L15 13H11L8 9.500L5 13H1L5.500 7Z" fill="#fff" stroke="#50303a" />
            </svg>
          </CloseButton>
        </DialogTitle>
        <DialogBody>
          <p>您登录的交易后台不支持标准套利合约交易！</p>
          <OkButton>确定</OkButton>
        </DialogBody>
      </Dialog>
    </Page>
  );
}
